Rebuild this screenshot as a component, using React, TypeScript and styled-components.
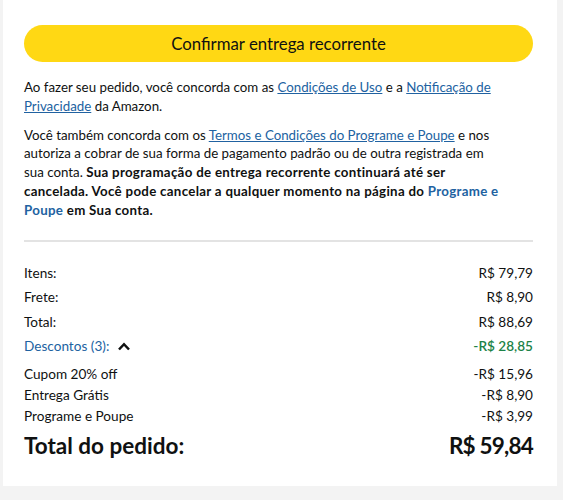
import React from "react";
import styled, { createGlobalStyle } from "styled-components";

const GlobalStyle = createGlobalStyle`
    html, body {
        margin: 0;
        padding: 0;
        background: #f3f3f3;
    }
    body {
        font-family: Lato, "Noto Sans", Arial, sans-serif;
        color: #0f1111;
    }
`;

const Card = styled.div`
    width: 554px;
    margin-left: 3px;
    background: #fff;
    padding: 25px 24px 26px 21px;
    box-sizing: border-box;
`;

const ConfirmButton = styled.button`
    display: block;
    width: 100%;
    height: 37px;
    border: none;
    border-radius: 19px;
    background: #ffd814;
    color: #0f1111;
    font-family: inherit;
    font-size: 16.8px;
    cursor: pointer;
`;

const Legal = styled.p`
    margin: 10px 0 0;
    max-width: 482px;
    font-size: 13.3px;
    line-height: 18.8px;

    &:first-of-type {
        margin-top: 16px;
    }
`;

const Strong = styled.b`
    letter-spacing: 0.3px;
`;

const Link = styled.a<{ $plain?: boolean }>`
    color: #2162a1;
    text-decoration: ${(p) => (p.$plain ? "none" : "underline")};
`;

const Divider = styled.hr`
    border: none;
    border-top: 2px solid #e3e3e3;
    margin: 20px 0 22px;
`;

const Summary = styled.div`
    display: flex;
    flex-direction: column;
    gap: 6px;
    font-size: 13.6px;
`;

const Row = styled.div<{ $tone?: "link" }>`
    display: flex;
    justify-content: space-between;
    align-items: center;
    line-height: 18.5px;
    color: ${(p) => (p.$tone === "link" ? "#2162a1" : "#0f1111")};
`;

const Amount = styled.span<{ $green?: boolean }>`
    color: ${(p) => (p.$green ? "#1d8348" : "inherit")};
    font-weight: ${(p) => (p.$green ? 600 : 400)};
`;

const DiscountLabel = styled.span`
    display: flex;
    align-items: center;
    gap: 8px;
`;

const DiscountList = styled.div`
    display: flex;
    flex-direction: column;
    gap: 2.5px;
    margin-top: 3px;
`;

const TotalRow = styled.div`
    display: flex;
    justify-content: space-between;
    align-items: center;
    margin-top: 7px;
    font-size: 22.5px;
    font-weight: 700;
    line-height: 28px;
`;

const TotalAmount = styled.span`
    letter-spacing: -0.8px;
`;

function Chevron() {
    return (
        <svg width="14" height="10" viewBox="0 0 14 10">
            <path d="M2 8.5 L7 3.2 L12 8.5" fill="none" stroke="#0f1111" strokeWidth="2.5" />
        </svg>
    );
}

const discounts = [
    ["Cupom 20% off", "-R$ 15,96"],
    ["Entrega Grátis", "-R$ 8,90"],
    ["Programe e Poupe", "-R$ 3,99"],
];

export default function App() {
    return (
        <>
            <GlobalStyle />
            <Card>
                <ConfirmButton>Confirmar entrega recorrente</ConfirmButton>
                <Legal>
                    Ao fazer seu pedido, você concorda com as <Link href="#">Condições de Uso</Link> e a{" "}
                    <Link href="#">Notificação de Privacidade</Link> da Amazon.
                </Legal>
                <Legal>
                    Você também concorda com os <Link href="#">Termos e Condições do Programe e Poupe</Link> e nos
                    autoriza a cobrar de sua forma de pagamento padrão ou de outra registrada em sua conta.{" "}
                    <Strong>
                        Sua programação de entrega recorrente continuará até ser cancelada. Você pode cancelar a
                        qualquer momento na página do <Link $plain href="#">Programe e Poupe</Link> em Sua conta.
                    </Strong>
                </Legal>
                <Divider />
                <Summary>
                    <Row>
                        <span>Itens:</span>
                        <Amount>R$ 79,79</Amount>
                    </Row>
                    <Row>
                        <span>Frete:</span>
                        <Amount>R$ 8,90</Amount>
                    </Row>
                    <Row>
                        <span>Total:</span>
                        <Amount>R$ 88,69</Amount>
                    </Row>
                    <Row $tone="link">
                        <DiscountLabel>
                            Descontos (3): <Chevron />
                        </DiscountLabel>
                        <Amount $green>-R$ 28,85</Amount>
                    </Row>
                    <DiscountList>
                        {discounts.map(([label, value]) => (
                            <Row key={label}>
                                <span>{label}</span>
                                <Amount>{value}</Amount>
                            </Row>
                        ))}
                    </DiscountList>
                </Summary>
                <TotalRow>
                    <span>Total do pedido:</span>
                    <TotalAmount>R$ 59,84</TotalAmount>
                </TotalRow>
            </Card>
        </>
    );
}
